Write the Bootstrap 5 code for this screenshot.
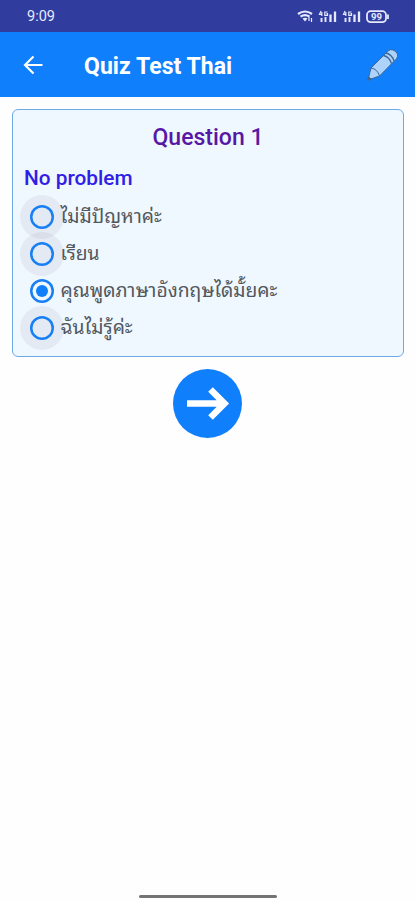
<!DOCTYPE html>
<html lang="th">
<head>
<meta charset="utf-8">
<meta name="viewport" content="width=device-width, initial-scale=1">
<title>Quiz Test Thai</title>
<link href="https://cdn.jsdelivr.net/npm/bootstrap@5.3.0/dist/css/bootstrap.min.css" rel="stylesheet">
<style>
body { font-family: Roboto, "Noto Sans Thai Looped", "Noto Sans Thai", "Noto Sans", sans-serif; background: #fffeff; }
.status-bar { height: 32px; background: #303d9f; color: #e6e9ff; font-size: 14.5px; padding: 0 26px 0 27px; }
.status-time { padding-top: 2px; }
.app-bar { height: 65px; background: #107ffb; padding: 0 17px 0 23px; }
.app-title { font-size: 23px; font-weight: 700; line-height: 28px; margin-left: 40px; padding-top: 4px; letter-spacing: .05px; }
.quiz-card { margin: 12px 11px 0 12px; height: 248px; background: #eff7ff; border: 1px solid #6ca9e6; border-radius: 6px; }
.question-no { color: #5618a5; font-size: 23px; font-weight: 500; line-height: 28px; margin-top: 14px; }
.prompt { color: #3020e6; font-size: 20.8px; font-weight: 500; line-height: 26px; margin: 13px 0 7px 11px; }
.answer { height: 37px; padding-left: 7px; color: #53575c; font-size: 19.25px; line-height: 32px; cursor: pointer; }
.halo { width: 44px; height: 44px; flex: none; border-radius: 50%; }
.halo.idle { background: rgba(50, 20, 50, .055); }
.radio-mark { width: 24px; height: 24px; box-shadow: inset 0 0 0 2.5px #187ff5; border-radius: 50%; }
.radio-dot { width: 12px; height: 12px; background: #107ffb; border-radius: 50%; }
.answer-text { margin-left: -3.5px; padding-top: 1px; white-space: nowrap; }
.next-btn { width: 69px; height: 69px; background: #107ffb; margin-top: 12px; }
.home-line { width: 138px; height: 3px; background: #747474; margin-bottom: 2px; }
</style>
<script src="https://cdn.jsdelivr.net/npm/bootstrap@5.3.0/dist/js/bootstrap.bundle.min.js"></script>
</head>
<body class="d-flex flex-column vh-100 overflow-hidden">
<div class="status-bar d-flex align-items-center justify-content-between">
  <span class="status-time">9:09</span>
  <svg width="93" height="16" viewBox="296 8 93 16" fill="none" stroke="#e6e9ff">
    <path d="M298 14Q305 9 312 14M300.5 16.7Q305 13.5 309.5 16.7" stroke-width="2.2"/>
    <path d="M302.5 18.5Q305 17 307.5 18.5L305 21.5Z" fill="#e6e9ff" stroke="none"/>
    <path d="M309 17v4M311.5 18v4" stroke-width="1.2"/>
    <g id="signal">
      <path d="M321 11l-1.5 3.3h3M321.8 12v4M327.5 12h-2.700v3.3h2.700v-1.700h-1" stroke-width="1.2"/>
      <path d="M321.5 18v4M325.5 17v5" stroke-width="1.9"/>
      <path d="M330.5 14.5V22M335 11.5V22" stroke-width="2.3"/>
    </g>
    <use href="#signal" x="24"/>
    <rect x="367" y="11.2" width="19" height="11" rx="3.7" stroke-width="1.8"/>
    <path d="M388 14.5v4.5" stroke-width="1.8"/>
    <text x="376.5" y="20.2" text-anchor="middle" font-size="9.5" font-weight="700" fill="#e6e9ff" stroke="none">99</text>
  </svg>
</div>
<header class="app-bar d-flex align-items-center text-white">
  <svg width="21" height="20" viewBox="0 0 21 20" fill="none" stroke="#fff" stroke-width="2.2"><path d="M19.5 10H2.5M10.5 1.5L2 10l8.5 8.5"/></svg>
  <h1 class="app-title mb-0">Quiz Test Thai</h1>
  <svg class="ms-auto" width="32" height="32" viewBox="366 49 32 32" stroke="#3c6796" stroke-width="1" stroke-linejoin="round">
    <path d="M368 80l3-12L387 52q3.500-4 7.500-1.200q5 3.200 2 8L379.500 76Z" fill="#add3fc"/>
    <path d="M371 68q6.500 1 8.500 8" fill="none"/>
    <path d="M368 80l.8-3.200 2.400 2.300Z" fill="#3c6796"/>
    <path d="M383.500 55.500q6 1.500 8 8M386 53q6 1.500 8 8" fill="none" stroke-width="1.3"/>
  </svg>
</header>
<main class="d-flex flex-column flex-grow-1">
  <section class="quiz-card">
    <h2 class="question-no text-center mb-0">Question 1</h2>
    <p class="prompt">No problem</p>
    <div class="answer d-flex align-items-center"><span class="halo idle d-flex align-items-center justify-content-center"><span class="radio-mark"></span></span><span class="answer-text">ไม่มีปัญหาค่ะ</span></div>
    <div class="answer d-flex align-items-center"><span class="halo idle d-flex align-items-center justify-content-center"><span class="radio-mark"></span></span><span class="answer-text">เรียน</span></div>
    <div class="answer d-flex align-items-center"><span class="halo d-flex align-items-center justify-content-center"><span class="radio-mark d-flex align-items-center justify-content-center"><span class="radio-dot"></span></span></span><span class="answer-text">คุณพูดภาษาอังกฤษได้มั้ยคะ</span></div>
    <div class="answer d-flex align-items-center"><span class="halo idle d-flex align-items-center justify-content-center"><span class="radio-mark"></span></span><span class="answer-text">ฉันไม่รู้ค่ะ</span></div>
  </section>
  <button type="button" aria-label="Next" class="next-btn btn rounded-circle border-0 p-0 align-self-center d-flex align-items-center justify-content-center">
    <svg width="69" height="69" viewBox="0 0 69 69" fill="none" stroke="#fff" stroke-width="6.5" stroke-linejoin="miter"><path d="M14 34.5H50M37.5 20.5L51.5 34.5L37.5 48.5"/></svg>
  </button>
</main>
<div class="home-line rounded-pill align-self-center"></div>
</body>
</html>
